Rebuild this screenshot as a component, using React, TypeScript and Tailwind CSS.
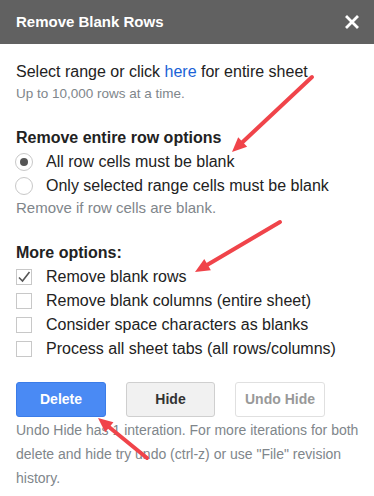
import React from "react";

const CHECK_OPTIONS: { label: string; checked: boolean }[] = [
    { label: "Remove blank rows", checked: true },
    { label: "Remove blank columns (entire sheet)", checked: false },
    { label: "Consider space characters as blanks", checked: false },
    { label: "Process all sheet tabs (all rows/columns)", checked: false },
];

function Arrow({ x1, y1, x2, y2 }: { x1: number; y1: number; x2: number; y2: number }) {
    const angle = Math.atan2(y2 - y1, x2 - x1);
    const len = 16;
    const spread = 0.42;
    const ax = x2 - len * Math.cos(angle - spread);
    const ay = y2 - len * Math.sin(angle - spread);
    const bx = x2 - len * Math.cos(angle + spread);
    const by = y2 - len * Math.sin(angle + spread);
    const ex = x2 - 11 * Math.cos(angle);
    const ey = y2 - 11 * Math.sin(angle);
    return (
        <g>
            <line x1={x1} y1={y1} x2={ex} y2={ey} stroke="#f0444a" strokeWidth={4} strokeLinecap="round" />
            <polygon points={`${x2},${y2} ${ax},${ay} ${bx},${by}`} fill="#f0444a" />
        </g>
    );
}

export default function App() {
    return (
        <div className="relative w-[374px] h-[496px] bg-white overflow-hidden font-['Liberation_Sans',Arial,sans-serif]">
            <div className="h-11 bg-[#616161] flex items-center justify-between pl-4 pr-[15px]">
                <span className="text-white text-[15px] font-bold">Remove Blank Rows</span>
                <svg width="14" height="14" viewBox="0 0 14 14">
                    <path d="M2 2 L12 12 M12 2 L2 12" stroke="#fff" strokeWidth="2.8" strokeLinecap="square" />
                </svg>
            </div>

            <div className="px-4 pt-4">
                <p className="text-[16px] leading-6 text-[#222]">
                    Select range or click <span className="text-[#1a62d6]">here</span> for entire sheet
                </p>
                <p className="text-[13.5px] leading-5 text-[#80868b]">Up to 10,000 rows at a time.</p>

                <p className="mt-[22px] text-[16px] leading-6 font-bold text-[#222]">Remove entire row options</p>
                <div className="flex flex-col">
                    <label className="flex items-center h-6 text-[16px] text-[#222]">
                        <span className="w-[18px] h-[18px] -ml-px rounded-full border border-[#c8c8c8] flex items-center justify-center mr-[13px]">
                            <span className="w-[8px] h-[8px] rounded-full bg-[#555]" />
                        </span>
                        All row cells must be blank
                    </label>
                    <label className="flex items-center h-6 text-[16px] text-[#222]">
                        <span className="w-[18px] h-[18px] -ml-px rounded-full border border-[#c8c8c8] mr-[13px]" />
                        Only selected range cells must be blank
                    </label>
                </div>
                <p className="text-[15px] leading-5 text-[#80868b]">Remove if row cells are blank.</p>

                <p className="mt-[23px] text-[16px] leading-6 font-bold text-[#222]">More options:</p>
                <div className="flex flex-col">
                    {CHECK_OPTIONS.map(({ label, checked }) => (
                        <label key={label} className="flex items-center h-6 text-[16px] text-[#222]">
                            <span className="w-4 h-4 border border-[#c8c8c8] flex items-center justify-center mr-[14px]">
                                {checked && (
                                    <svg width="14" height="14" viewBox="0 0 14 14">
                                        <path d="M2 7.5 L5.5 11 L12.5 2" fill="none" stroke="#555" strokeWidth="1.6" />
                                    </svg>
                                )}
                            </span>
                            {label}
                        </label>
                    ))}
                </div>

                <div className="mt-[21px] flex gap-5">
                    <button className="w-[90px] h-[35px] rounded-[3px] bg-[#4a8af4] border border-[#3b7ce8] text-white text-[14px] font-bold">
                        Delete
                    </button>
                    <button className="w-[89px] h-[35px] rounded-[3px] bg-[#f1f1f1] border border-[#cfcfcf] text-[#333] text-[14px] font-bold">
                        Hide
                    </button>
                    <button className="w-[90px] h-[35px] rounded-[3px] bg-white border border-[#e0e0e0] text-[#999] text-[14px] font-bold">
                        Undo Hide
                    </button>
                </div>
                <p className="mt-px -mr-3 text-[14px] leading-6 text-[#80868b]">
                    Undo Hide has 1 interation. For more iterations for both delete and hide try undo (ctrl-z) or use "File" revision history.
                </p>
            </div>

            <svg className="absolute inset-0 pointer-events-none" width="374" height="496">
                <Arrow x1={312} y1={77} x2={232} y2={152} />
                <Arrow x1={280} y1={222} x2={195} y2={272} />
                <Arrow x1={147} y1={458} x2={98} y2={418} />
            </svg>
        </div>
    );
}
